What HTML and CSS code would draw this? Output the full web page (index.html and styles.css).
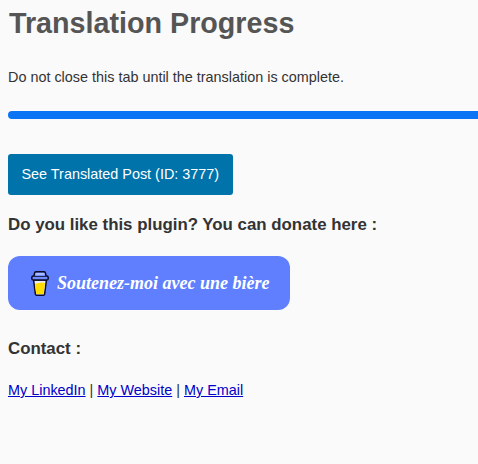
FILE: index.html
```html
<!DOCTYPE html>
<html lang="en">
<head>
<meta charset="utf-8">
<title>Translation Progress</title>
<link rel="stylesheet" href="styles.css">
</head>
<body>
<main class="wrap">
  <h1 class="title">Translation Progress</h1>
  <p class="note">Do not close this tab until the translation is complete.</p>
  <div class="progress"></div>
  <a class="see-btn" href="#">See Translated Post (ID: 3777)</a>
  <h3 class="heading donate-heading">Do you like this plugin? You can donate here :</h3>
  <a class="bmc" href="#">
    <svg class="bmc-icon" viewBox="0 0 18 25" width="18" height="25" aria-hidden="true">
      <path d="M2.6 9 L4.4 23.2 Q4.6 24.2 5.6 24.2 L12.4 24.2 Q13.4 24.2 13.6 23.2 L15.4 9 Z" fill="#e8ecff" stroke="#0d0c22" stroke-width="1.5" stroke-linejoin="round"/>
      <path d="M3.9 13 Q9 10.5 14.1 12 L12.7 23 L5.3 23 Z" fill="#ffdd00"/>
      <rect x="0.8" y="5" width="16.4" height="4" rx="1.6" fill="#6f8bff" stroke="#0d0c22" stroke-width="1.5"/>
      <path d="M3 5 L3.6 1.8 Q3.8 0.8 4.8 0.8 L13.2 0.8 Q14.2 0.8 14.4 1.8 L15 5" fill="#6f8bff" stroke="#0d0c22" stroke-width="1.5"/>
      <path d="M4.5 3 L13.5 3" fill="none" stroke="#e8ecff" stroke-width="1"/>
    </svg>
    <span class="bmc-text">Soutenez-moi avec une bière</span>
  </a>
  <h3 class="heading contact-heading">Contact :</h3>
  <p class="links"><a href="#">My LinkedIn</a> | <a href="#">My Website</a> | <a href="#">My Email</a></p>
</main>
</body>
</html>
```
FILE: styles.css
```css
html, body {
  margin: 0;
  height: 100%;
  overflow: hidden;
}
body {
  background: #fafafa;
  color: #333;
  font-family: "Liberation Sans", Arial, sans-serif;
  font-size: 14.4px;
}
.wrap {
  display: flow-root;
  padding-left: 8px;
}
.title {
  margin: 7px 0 0 1px;
  font-size: 28.7px;
  line-height: 33px;
  color: #555;
  font-weight: 700;
}
.note {
  margin: 29px 0 0;
  line-height: 16px;
}
.progress {
  margin: 26px -10px 0 0;
  height: 8px;
  border-radius: 4px;
  background: #0a74f4;
}
.see-btn {
  display: inline-block;
  margin-top: 35px;
  padding: 12px 13.5px;
  background: #0073aa;
  color: #fff;
  border-radius: 3px;
  text-decoration: none;
  line-height: 17px;
}
.heading {
  margin: 0;
  font-size: 16.85px;
  line-height: 19px;
  font-weight: 700;
  color: #333;
}
.donate-heading {
  margin-top: 20px;
}
.bmc {
  display: flex;
  align-items: center;
  width: 282px;
  height: 54px;
  margin-top: 22px;
  padding-left: 23px;
  box-sizing: border-box;
  background: #5f7fff;
  border-radius: 12px;
  text-decoration: none;
}
.bmc-icon {
  flex: none;
}
.bmc-text {
  margin-left: 8px;
  color: #fff;
  font-family: "Liberation Serif", serif;
  font-style: italic;
  font-weight: 700;
  font-size: 18px;
  white-space: nowrap;
}
.contact-heading {
  margin-top: 29px;
}
.links {
  margin: 24px 0 0;
  line-height: 16px;
}
.links a {
  color: #0000c8;
}
```
